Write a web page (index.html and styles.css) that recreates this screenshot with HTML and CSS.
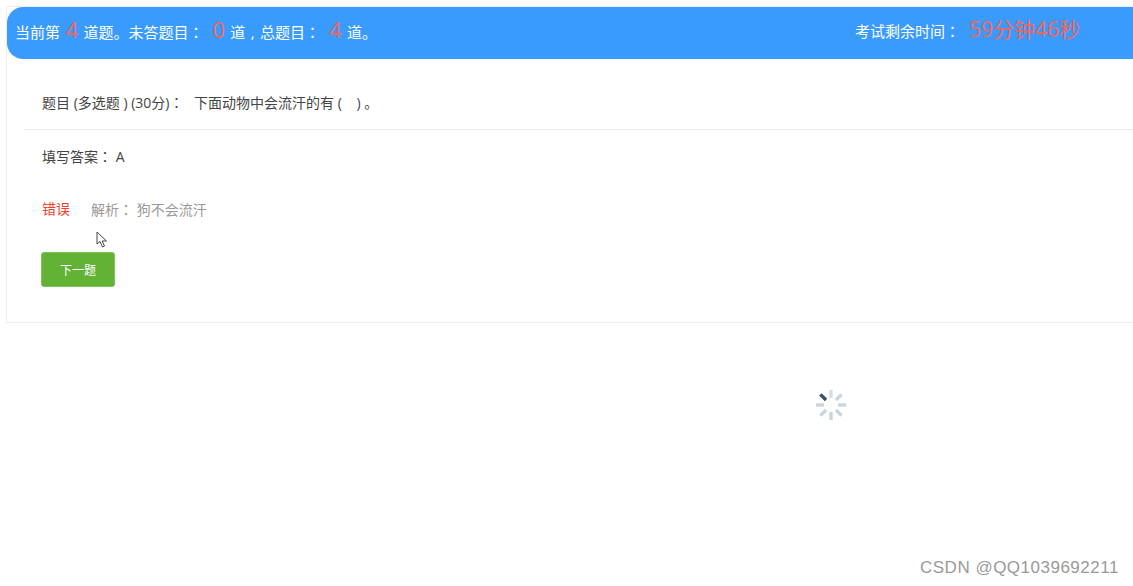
FILE: index.html
```html
<!DOCTYPE html>
<html>
<head>
<meta charset="utf-8">
<title>考试</title>
<link rel="stylesheet" href="styles.css">
</head>
<body>
<div class="card">
  <header class="bar">
    <div class="progress">当前第 <b class="num">4</b> 道题。未答题目<span class="colon">：</span> <b class="num">0</b> 道 , 总题目<span class="colon">：</span> <b class="num">4</b> 道。</div>
    <div class="timer">考试剩余时间<span class="colon">：</span> <b class="time">59分钟46秒</b></div>
  </header>
  <div class="question">题目 (多选题 ) (30分)<span class="colon">：</span> 下面动物中会流汗的有 (&nbsp;&nbsp;&nbsp;&nbsp;) 。</div>
  <div class="body">
    <p class="answer">填写答案<span class="colon">：</span> A</p>
    <p class="result"><span class="wrong">错误</span><span class="analysis">解析<span class="colon">：</span> 狗不会流汗</span></p>
    <button class="next">下一题</button>
  </div>
</div>
<svg class="cursor" width="12" height="18" viewBox="0 0 12 18"><path d="M1 1 L1 13 L4 10.5 L6.5 16 L8.5 15 L6.2 10 L10.5 10 Z" fill="#fff" stroke="#444" stroke-width="1"/></svg>
<svg class="spinner" width="32" height="32" viewBox="0 0 32 32">
  <g stroke-width="3.4">
    <line x1="16" y1="1" x2="16" y2="9" stroke="#d5dee8"/>
    <line x1="26.6" y1="5.4" x2="21" y2="11" stroke="#c9d5e0"/>
    <line x1="31" y1="16" x2="23" y2="16" stroke="#c9d5e0"/>
    <line x1="26.6" y1="26.6" x2="21" y2="21" stroke="#c9d5e0"/>
    <line x1="16" y1="31" x2="16" y2="23" stroke="#c9d5e0"/>
    <line x1="5.4" y1="26.6" x2="11" y2="21" stroke="#c9d5e0"/>
    <line x1="1" y1="16" x2="9" y2="16" stroke="#c9d5e0"/>
    <line x1="5.4" y1="5.4" x2="11" y2="11" stroke="#34506e"/>
  </g>
</svg>
<div class="mark">CSDN @QQ1039692211</div>
</body>
</html>
```
FILE: styles.css
```css
html, body { margin: 0; padding: 0; height: 586px; overflow: hidden; background: #fff; }
body { font-family: "Open Sans", "Noto Sans CJK SC", sans-serif; color: #444; font-size: 14px; padding: 6px 0 0 6px; box-sizing: border-box; }
.card { border: 1px solid #eee; border-right: 0; height: 317px; box-sizing: border-box; width: 1127px; }
.bar { height: 52px; background: #3a9bff; border-radius: 16px 0 0 16px; display: flex; align-items: center; justify-content: space-between; color: #fff; font-size: 15px; word-spacing: 1.5px; padding: 0 53px 7px 8px; box-sizing: border-box; }
.colon { font-family: "Noto Sans CJK TC", sans-serif; }
.bar .colon { padding-right: 3.5px; }
.question .colon { padding-right: 7px; }
.num { font-weight: 400; font-size: 22px; color: #f0665a; line-height: 1; }
.time { font-weight: 400; font-size: 21px; color: #f0665a; line-height: 1; }
.question { margin: 0 0 0 17px; padding: 34px 18px 17px; border-bottom: 1px solid #eee; line-height: 18px; }
.body { padding: 0 0 0 35px; }
.answer { margin: 17px 0 0; line-height: 18px; }
.result { margin: 34px 0 0; line-height: 18px; display: flex; gap: 21px; }
.wrong { color: #f0402a; }
.analysis { color: #999; }
.next { display: block; margin: 33px 0 0 -1px; width: 74px; height: 35px; background: #62b236; color: #fff; border: 1px solid #7cc257; border-radius: 3px; font: 12px "Noto Sans CJK SC", sans-serif; padding: 0; }
.cursor { position: absolute; left: 96px; top: 231px; }
.spinner { position: absolute; left: 815px; top: 389px; }
.mark { position: absolute; left: 920px; top: 558px; font-family: "Liberation Sans", sans-serif; font-size: 17px; letter-spacing: 0.5px; color: #9a9a9a; white-space: nowrap; }
```
